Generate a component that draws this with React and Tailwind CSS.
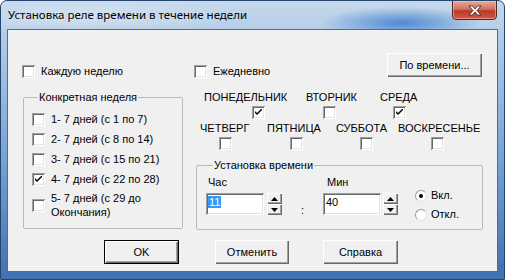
import React from 'react';

const font = { fontFamily: '"Liberation Sans", Arial, sans-serif' };

const Check = ({ checked }) => (
	<span className="w-[13px] h-[13px] shrink-0 bg-white flex items-center justify-center shadow-[inset_1px_1px_#a0a0a0,inset_-1px_-1px_#ffffff,inset_2px_2px_#696969,inset_-2px_-2px_#e3e3e3]">
		{checked && (
			<svg width="7" height="7" viewBox="0 0 7 7">
				<path d="M0 2 L0 4 L2 6 L7 1 L7 -1 L2 4 Z" fill="#000" />
			</svg>
		)}
	</span>
);

const Radio = ({ checked }) => (
	<span className="w-[12px] h-[12px] shrink-0 rounded-full bg-white border border-[#9a9a9a] border-b-[#e0e0e0] border-r-[#e0e0e0] flex items-center justify-center">
		{checked && <span className="w-[4px] h-[4px] rounded-full bg-black" />}
	</span>
);

const Button = ({ children, className = '', def }) => (
	<div
		className={`h-[24px] flex items-center justify-center bg-[#f0f0f0] text-[11px] ${
			def
				? 'border border-black shadow-[inset_1px_1px_#ffffff,inset_-1px_-1px_#696969,inset_-2px_-2px_#a0a0a0]'
				: 'shadow-[inset_1px_1px_#ffffff,inset_-1px_-1px_#696969,inset_-2px_-2px_#a0a0a0]'
		} ${className}`}
	>
		{children}
	</div>
);

const Spin = () => (
	<div className="flex flex-col w-[15px] h-[22px]">
		{['up', 'down'].map((d) => (
			<div
				key={d}
				className="h-[11px] flex items-center justify-center bg-[#f0f0f0] shadow-[inset_1px_1px_#ffffff,inset_-1px_-1px_#696969,inset_-2px_-2px_#a0a0a0]"
			>
				<svg width="7" height="4" viewBox="0 0 7 4">
					{d === 'up' ? (
						<path d="M3.5 0 L7 4 L0 4 Z" fill="#000" />
					) : (
						<path d="M0 0 L7 0 L3.5 4 Z" fill="#000" />
					)}
				</svg>
			</div>
		))}
	</div>
);

const Edit = ({ value, selected }) => (
	<div className="w-[58px] h-[22px] bg-white px-[2px] pt-[3px] text-[11px] shadow-[inset_1px_1px_#a0a0a0,inset_-1px_-1px_#ffffff,inset_2px_2px_#696969,inset_-2px_-2px_#e3e3e3]">
		<span className={selected ? 'bg-[#3399ff] text-white px-[1px]' : 'px-[1px]'}>{value}</span>
	</div>
);

const weeks = [
	{ label: '1- 7 дней (с 1 по 7)' },
	{ label: '2- 7 дней (с 8 по 14)' },
	{ label: '3- 7 дней (с 15 по 21)' },
	{ label: '4- 7 дней (с 22 по 28)', checked: true },
];

const daysTop = [
	{ name: 'ПОНЕДЕЛЬНИК', w: 'w-[102px]', off: 'ml-[48px]', checked: true },
	{ name: 'ВТОРНИК', w: 'w-[74px]', off: 'ml-[17px]' },
	{ name: 'СРЕДА', w: 'w-[60px]', off: 'ml-[13px]', checked: true },
];

const daysBottom = [
	{ name: 'ЧЕТВЕРГ', w: 'w-[67px]', off: 'ml-[19px]' },
	{ name: 'ПЯТНИЦА', w: 'w-[69px]', off: 'ml-[23px]' },
	{ name: 'СУББОТА', w: 'w-[62px]', off: 'ml-[24px]' },
	{ name: 'ВОСКРЕСЕНЬЕ', w: 'w-[84px]', off: 'ml-[33px]' },
];

const Day = ({ name, w, off, checked }) => (
	<div className={`${w} flex flex-col`}>
		<span className="h-[13px] leading-[13px]">{name}</span>
		<div className={`${off} mt-[2px]`}>
			<Check checked={checked} />
		</div>
	</div>
);

const App = () => {
	return (
		<div
			className="w-[505px] h-[280px] flex flex-col rounded-t-[7px] border border-[#24456e] bg-[linear-gradient(180deg,#c6d8eb_0%,#b3cce7_12%,#7aa4d6_55%,#3f70b0_100%)] overflow-hidden text-black"
			style={font}
		>
			<div className="h-[28px] shrink-0 flex items-start bg-[radial-gradient(ellipse_80px_16px_at_400px_22px,#4f8ad2,transparent),radial-gradient(ellipse_160px_20px_at_80px_14px,#d3e2f1,transparent)]">
				<span
					className="ml-[7px] mt-[6px] text-[11.5px] leading-[16px] text-black"
					style={{ fontFamily: '"Noto Sans", "Liberation Sans", sans-serif' }}
				>
					Установка реле времени в течение недели
				</span>
				<div className="ml-auto mr-[7px] -mt-px w-[45px] h-[20px] rounded-b-[4px] border border-[#5a2520] bg-[linear-gradient(180deg,#e9a99c_0%,#d2715f_45%,#b83a26_55%,#d55a45_100%)] flex items-center justify-center shadow-[inset_0_0_0_1px_rgba(255,200,190,0.5)]">
					<svg width="14" height="11" viewBox="0 0 14 11">
						<path
							d="M1 1 L4.5 1 L7 4 L9.5 1 L13 1 L9 5.5 L13 10 L9.5 10 L7 7 L4.5 10 L1 10 L5 5.5 Z"
							fill="#fff"
							stroke="#4a2a2a"
							strokeWidth="0.9"
						/>
					</svg>
				</div>
			</div>

			<div className="mx-[6px] mb-[7px] flex-1 border border-[#4d6d96] bg-[#f0f0f0] flex flex-col text-[11px] leading-[13px] pt-[23px]">
				{/* top row */}
				<div className="flex h-[24px]">
					<div className="w-[172px] ml-[14px] mt-[12px] flex items-start gap-[6px]">
						<Check />
						<span>Каждую неделю</span>
					</div>
					<div className="mt-[12px] flex items-start gap-[6px]">
						<Check />
						<span>Ежедневно</span>
					</div>
					<Button className="ml-auto mr-[15px] w-[95px]">По времени...</Button>
				</div>

				<div className="flex">
					<fieldset className="ml-[15px] mt-[14px] w-[160px] h-[138px] border border-[#b9b9b9] rounded-[2px] px-[8px]">
						<legend className="ml-[6px] px-[1px]">Конкретная неделя</legend>
						<div className="flex flex-col pt-[5px]">
							{weeks.map((wk) => (
								<div key={wk.label} className="h-[20px] flex items-center gap-[6px]">
									<Check checked={wk.checked} />
									<span>{wk.label}</span>
								</div>
							))}
							<div className="mt-[2px] flex items-center gap-[6px]">
								<Check />
								<span className="w-[110px] leading-[14px]">5- 7 дней (с 29 до Окончания)</span>
							</div>
						</div>
					</fieldset>

					<div className="ml-[13px] flex flex-col">
						<div className="mt-[14px] ml-[8px] flex">
							{daysTop.map((d) => (
								<Day key={d.name} {...d} />
							))}
						</div>
						<div className="mt-[3px] ml-[4px] flex">
							{daysBottom.map((d) => (
								<Day key={d.name} {...d} />
							))}
						</div>

						<fieldset className="mt-[9px] w-[287px] h-[71px] border border-[#b9b9b9] rounded-[2px] pl-[9px]">
							<legend className="ml-[7px] px-[1px]">Установка времени</legend>
							<div className="flex pt-[4px]">
								<div className="flex flex-col">
									<span className="ml-[2px]">Час</span>
									<div className="mt-[4px] flex gap-[3px]">
										<Edit value="11" selected />
										<Spin />
									</div>
								</div>
								<div className="w-[41px] flex items-end justify-center pb-[4px]">
									<span>:</span>
								</div>
								<div className="flex flex-col">
									<span className="ml-[4px]">Мин</span>
									<div className="mt-[4px] flex gap-[2px]">
										<Edit value="40" />
										<Spin />
									</div>
								</div>
								<div className="ml-[17px] mt-[13px] flex flex-col gap-[6px]">
									<div className="flex items-center gap-[4px]">
										<Radio checked />
										<span>Вкл.</span>
									</div>
									<div className="flex items-center gap-[4px]">
										<Radio />
										<span>Откл.</span>
									</div>
								</div>
							</div>
						</fieldset>
					</div>
				</div>

				<div className="mt-[10px] flex">
					<Button def className="ml-[96px] w-[75px]">OK</Button>
					<Button className="ml-[36px] w-[74px]">Отменить</Button>
					<Button className="ml-[34px] w-[75px]">Справка</Button>
				</div>
			</div>
		</div>
	);
};

export default App;
